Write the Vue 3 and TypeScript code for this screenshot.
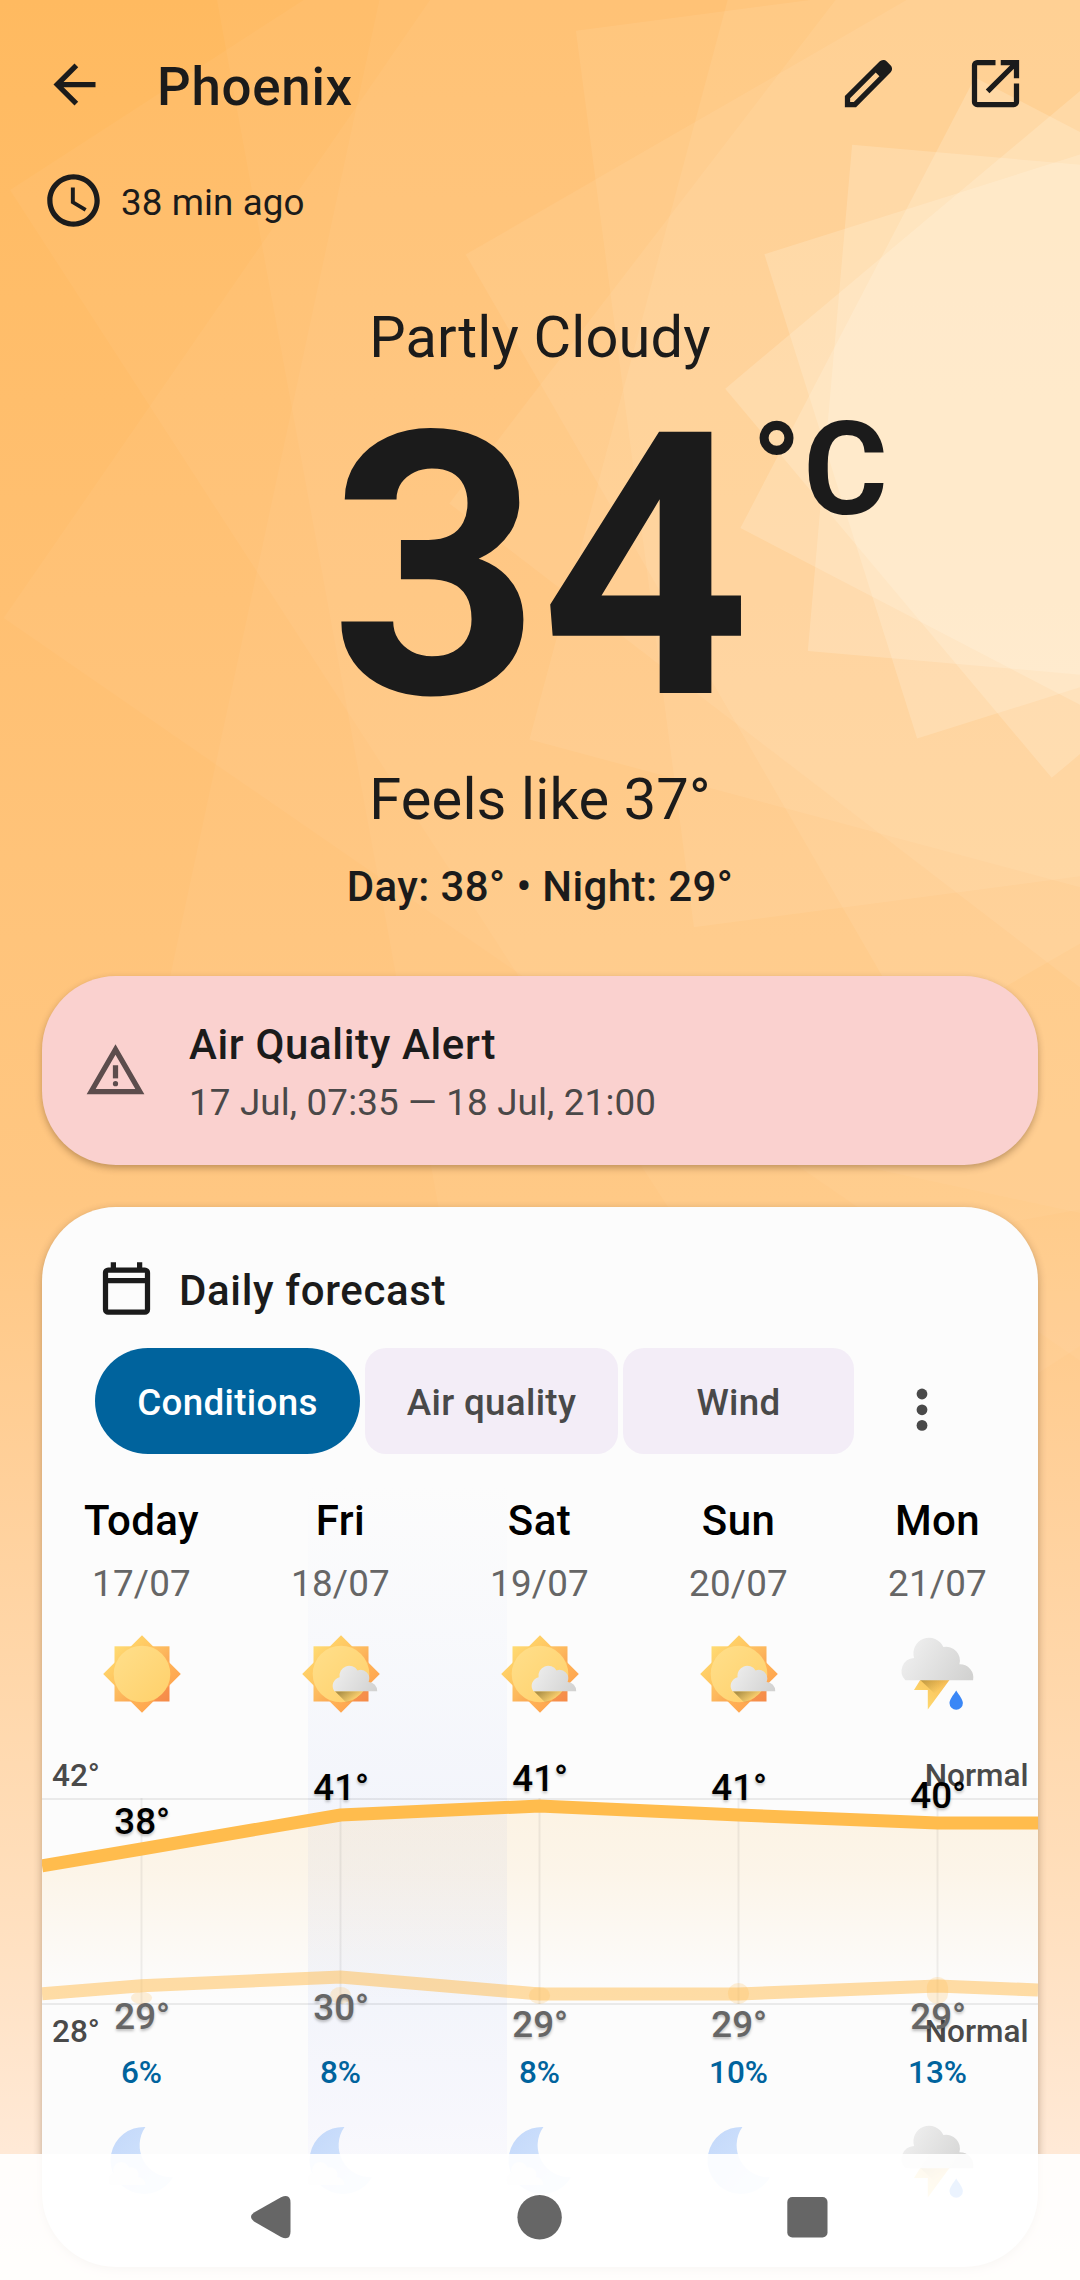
<script setup lang="ts">
type Sky = 'sun' | 'partly' | 'storm' | 'moon' | 'moonCloud'

interface Day {
  name: string
  date: string
  sky: Sky
  night: Sky
  high: number
  low: number
  highY: number
  lowY: number
  rain: number
  barTop: number
}

const days: Day[] = [
  { name: 'Today', date: '17/07', sky: 'sun', night: 'moonCloud', high: 38, low: 29, highY: 133, lowY: 269.7, rain: 6, barTop: 275.7 },
  { name: 'Fri', date: '18/07', sky: 'partly', night: 'moonCloud', high: 41, low: 30, highY: 99, lowY: 261, rain: 8, barTop: 271 },
  { name: 'Sat', date: '19/07', sky: 'partly', night: 'moonCloud', high: 41, low: 29, highY: 90, lowY: 278, rain: 8, barTop: 271 },
  { name: 'Sun', date: '20/07', sky: 'partly', night: 'moon', high: 41, low: 29, highY: 99, lowY: 278, rain: 10, barTop: 267 },
  { name: 'Mon', date: '21/07', sky: 'storm', night: 'storm', high: 40, low: 29, highY: 107, lowY: 270, rain: 13, barTop: 261 },
]

const colX = (i: number) => 99.5 + i * 199
const highPts = ['0,149.8', ...days.map((d, i) => `${colX(i)},${d.highY}`), '996,107']
const lowPts = ['0,277.8', ...days.map((d, i) => `${colX(i)},${d.lowY}`), '996,274']
const area = [...highPts, '996,288', '0,288'].join(' ')

// Sun rays: three rings of four squares turned around one centre
const rings = [
  { half: 776, angle: 12.1, alpha: 0.04 },
  { half: 452, angle: 15, alpha: 0.07 },
  { half: 254, angle: 5, alpha: 0.18 },
]
const squares = rings.flatMap((r) =>
  [0, 1, 2, 3].map((k) => ({ ...r, turn: r.angle + k * 22.5 + 45 })),
)
const tabs = ['Conditions', 'Air quality', 'Wind']
</script>

<template>
  <div class="screen">
    <svg class="rays" viewBox="0 0 1080 2280">
      <rect
        v-for="(s, i) in squares"
        :key="i"
        :x="-s.half"
        :y="-s.half"
        :width="s.half * 2"
        :height="s.half * 2"
        :fill-opacity="s.alpha"
        :transform="`translate(1083 420) rotate(${s.turn})`"
        fill="#fffdf6"
      />
    </svg>

    <svg class="defs" width="0" height="0">
      <defs>
        <linearGradient id="sq" x1="0" y1="0" x2="1" y2="1">
          <stop offset="0" stop-color="#ffdc72" />
          <stop offset=".5" stop-color="#fdb75c" />
          <stop offset=".85" stop-color="#f7914c" />
          <stop offset="1" stop-color="#f58a48" />
        </linearGradient>
        <linearGradient id="dm" x1=".25" y1=".25" x2=".75" y2=".75">
          <stop offset="0" stop-color="#ffd067" />
          <stop offset="1" stop-color="#ffa750" />
        </linearGradient>
        <linearGradient id="disc" x1="0" y1="0" x2="1" y2="1">
          <stop offset="0" stop-color="#ffdf8b" />
          <stop offset="1" stop-color="#ffd06a" />
        </linearGradient>
        <linearGradient id="cloud" gradientUnits="userSpaceOnUse" x1="15" y1="15" x2="70" y2="50">
          <stop offset="0" stop-color="#ededed" />
          <stop offset="1" stop-color="#d2d2d1" />
        </linearGradient>
        <linearGradient id="cloudS" gradientUnits="userSpaceOnUse" x1="38" y1="38" x2="76" y2="60">
          <stop offset="0" stop-color="#ececec" />
          <stop offset="1" stop-color="#d2d2d1" />
        </linearGradient>
        <linearGradient id="shade" gradientUnits="userSpaceOnUse" x1="44" y1="58" x2="53" y2="70">
          <stop offset="0" stop-color="#6b5a20" stop-opacity=".55" />
          <stop offset="1" stop-color="#6b5a20" stop-opacity="0" />
        </linearGradient>
        <linearGradient id="boltShade" gradientUnits="userSpaceOnUse" x1="28" y1="46" x2="40" y2="60">
          <stop offset="0" stop-color="#8a6a20" stop-opacity=".5" />
          <stop offset="1" stop-color="#8a6a20" stop-opacity="0" />
        </linearGradient>
        <linearGradient id="bolt" x1="1" y1="0" x2="0" y2="1">
          <stop offset="0" stop-color="#f9bd55" />
          <stop offset="1" stop-color="#ffdf76" />
        </linearGradient>
        <linearGradient id="moon" x1="0" y1="0" x2="1" y2="1">
          <stop offset="0" stop-color="#c3d8fa" />
          <stop offset="1" stop-color="#d8e8fd" />
        </linearGradient>
        <g id="sun">
          <rect x="14.5" y="14.3" width="55" height="55.2" fill="url(#sq)" />
          <path d="M42 3.2 80.8 42 42 80.8 3.2 42z" fill="url(#dm)" />
          <circle cx="42" cy="42" r="28.3" fill="url(#disc)" />
        </g>
        <g id="ic-sun"><use href="#sun" /></g>
        <g id="ic-partly">
          <use href="#sun" />
          <path d="M36 59.3H68L58 68.5Q52 71 47 70.2z" fill="url(#shade)" />
          <path d="M35.4 59.3A9 9 0 0 1 40.6 45.2A9.8 9.8 0 0 1 58.6 38.4A8.7 8.7 0 0 1 69.6 49.9A9 9 0 0 1 78.2 59.3z" fill="url(#cloudS)" />
        </g>
        <g id="ic-storm" transform="translate(.8 0)">
          <path d="M23.4 48H52.7L31 77.6V58H17.2z" fill="url(#bolt)" />
          <path d="M23.4 48H52.7L39.8 63.6z" fill="url(#boltShade)" />
          <path d="M59.4 58.4C56 63.6 52.7 67.5 52.7 71.1a6.7 6.6 0 0 0 13.4 0C66.1 67.5 62.8 63.6 59.4 58.4z" fill="#3a87f6" />
          <path d="M8.6 48.3A13 13 0 0 1 17.3 26.1A15.7 15.7 0 0 1 46.6 15A13.8 13.8 0 0 1 62.6 32.3A13.3 13.3 0 0 1 76.3 48.3z" fill="url(#cloud)" />
        </g>
        <g id="ic-moon">
          <path d="M45.4 7A33.5 33.5 0 1 0 73 57.3A32 32 0 0 1 45.4 7z" fill="url(#moon)" />
        </g>
        <g id="ic-moonCloud">
          <use href="#ic-moon" />
          <path d="M10.4 65A7.6 7.6 0 0 1 13.5 53A8.2 8.2 0 0 1 29 47.5A7.4 7.4 0 0 1 38 57A7.6 7.6 0 0 1 45.4 65z" fill="#efefed" />
        </g>
      </defs>
    </svg>

    <header class="bar">
      <svg class="ico back" viewBox="0 0 24 24"><path d="M20 11H7.83l5.59-5.59L12 4l-8 8 8 8 1.41-1.41L7.83 13H20z" /></svg>
      <h1>Phoenix</h1>
      <svg class="ico edit" viewBox="0 0 24 24">
        <path fill-rule="evenodd" d="M3 21v-4.25L16.2 3.58a2 2 0 0 1 1.35-.58c.53 0 1.03.18 1.42.6l1.4 1.4c.42.4.6.9.6 1.42 0 .5-.2 1-.6 1.38L7.25 21zM5 19h1.4l9.75-9.75-1.4-1.4L5 17.6z" />
      </svg>
      <svg class="ico" viewBox="0 0 24 24">
        <path d="M5 21q-.825 0-1.412-.587T3 19V5q0-.825.588-1.412T5 3h7v2H5v14h14v-7h2v7q0 .825-.587 1.413T19 21zm4.7-5.3-1.4-1.4L17.6 5H14V3h7v7h-2V6.4z" />
      </svg>
    </header>

    <div class="updated">
      <svg class="ico" viewBox="0 0 24 24">
        <path d="M11.99 2C6.47 2 2 6.48 2 12s4.47 10 9.99 10C17.52 22 22 17.52 22 12S17.52 2 11.99 2zM12 20c-4.42 0-8-3.58-8-8s3.58-8 8-8 8 3.58 8 8-3.58 8-8 8zm.5-13H11v6l5.25 3.15.75-1.23-4.5-2.67z" />
      </svg>
      <span>38 min ago</span>
    </div>

    <section class="now">
      <div class="cond">Partly Cloudy</div>
      <div class="temp">34<span class="unit">°C</span></div>
      <div class="feels">Feels like 37°</div>
      <div class="range">Day: 38° • Night: 29°</div>
    </section>

    <section class="alert">
      <svg class="ico" viewBox="0 0 24 24">
        <path d="M1 21 12 2l11 19zm3.45-2h15.1L12 6z" />
        <path d="M11 10h2v5h-2z" /><circle cx="12" cy="17" r="1" />
      </svg>
      <div>
        <div class="alert-title">Air Quality Alert</div>
        <div class="alert-time">17 Jul, 07:35 — 18 Jul, 21:00</div>
      </div>
    </section>

    <section class="card">
      <div class="card-head">
        <svg class="ico" viewBox="0 0 24 24">
          <path fill-rule="evenodd" d="M5 22q-.825 0-1.412-.587T3 20V6q0-.825.588-1.412T5 4h1V2h2v2h8V2h2v2h1q.825 0 1.413.588T21 6v14q0 .825-.587 1.413T19 22zM5 20h14V10H5zM5 8h14V6H5z" />
        </svg>
        <span>Daily forecast</span>
      </div>
      <div class="tabs">
        <div v-for="(t, i) in tabs" :key="t" class="tab" :class="['t' + i, { on: i === 0 }]">{{ t }}</div>
        <svg class="more" viewBox="0 0 12 44"><circle cx="6" cy="6" r="5.4" /><circle cx="6" cy="21.8" r="5.4" /><circle cx="6" cy="37.4" r="5.4" /></svg>
      </div>

      <div class="forecast">
        <div class="cols">
          <div v-for="d in days" :key="d.name" class="col">
            <div class="name">{{ d.name }}</div>
            <div class="date">{{ d.date }}</div>
            <svg class="sky" viewBox="0 0 84 84"><use :href="'#ic-' + d.sky" /></svg>
          </div>
        </div>

        <svg class="chart" viewBox="0 0 996 334">
          <defs>
            <linearGradient id="fill" gradientUnits="userSpaceOnUse" x1="0" y1="90" x2="0" y2="285">
              <stop offset="0" stop-color="#ffbb4e" stop-opacity=".14" />
              <stop offset=".35" stop-color="#ffbb4e" stop-opacity=".11" />
              <stop offset=".9" stop-color="#ffbb4e" stop-opacity=".01" />
              <stop offset="1" stop-color="#ffbb4e" stop-opacity="0" />
            </linearGradient>
          </defs>
          <rect x="0" y="82" width="996" height="2" fill="#000" fill-opacity=".07" />
          <rect x="0" y="287" width="996" height="2" fill="#000" fill-opacity=".07" />
          <text class="axis" x="10" y="69.7">42°</text>
          <text class="axis" x="986.5" y="69.7" text-anchor="end">Normal</text>
          <text class="axis" x="10" y="325.7">28°</text>
          <text class="axis" x="986.5" y="325.7" text-anchor="end">Normal</text>
          <polygon :points="area" fill="url(#fill)" />
          <rect v-for="(d, i) in days" :key="'v' + i" :x="colX(i) - 1" y="82" width="2" height="206" fill="#000" fill-opacity=".06" />
          <polyline :points="highPts.join(' ')" fill="none" stroke="#ffbc4d" stroke-width="13" />
          <polyline :points="lowPts.join(' ')" fill="none" stroke="#ffbc4d" stroke-opacity=".5" stroke-width="13" />
          <g v-for="(d, i) in days" :key="'l' + i">
            <rect
              :x="colX(i) - 10.6"
              :y="d.barTop"
              width="21.2"
              :height="288 - d.barTop"
              rx="10.6"
              :ry="Math.min(10.6, (288 - d.barTop) / 2)"
              fill="#ffbc4d"
              fill-opacity=".22"
            />
            <text class="hi" :x="colX(i) + 0.7" :y="d.highY - 14.9">{{ d.high }}°</text>
            <text class="lo" :x="colX(i) + 0.7" :y="d.lowY + 43.4">{{ d.low }}°</text>
          </g>
        </svg>

        <div class="cols rain">
          <div v-for="d in days" :key="d.name" class="col">{{ d.rain }}%</div>
        </div>
        <div class="cols nights">
          <div v-for="d in days" :key="d.name" class="col">
            <svg class="sky" viewBox="0 0 84 84"><use :href="'#ic-' + d.night" /></svg>
          </div>
        </div>
      </div>
    </section>

    <nav class="nav">
      <svg viewBox="0 0 1080 126">
        <path d="M281 43.2 254 58.6Q248 63 254 67.4L281 83Q290.5 87 290.5 77.5V48.6Q290.5 39 281 43.2z" />
        <circle cx="539.6" cy="63.2" r="22.2" />
        <rect x="787.3" y="43" width="40.2" height="40.4" rx="5" />
      </svg>
    </nav>
  </div>
</template>

<style>
body {
  margin: 0;
}
</style>

<style scoped>
.screen {
  position: relative;
  width: 1080px;
  height: 2280px;
  overflow: hidden;
  font-family: Roboto, sans-serif;
  color: #1b1b1b;
  background: linear-gradient(
    #ffba60 0,
    #ffc072 600px,
    #ffc782 1200px,
    #ffd09a 1480px,
    #ffddb8 1850px,
    #ffe9d6 2150px,
    #ffeee0 2280px
  );
}
.rays {
  position: absolute;
  inset: 0;
  width: 1080px;
  height: 2280px;
}
.defs {
  position: absolute;
}
.ico {
  width: 63px;
  height: 63px;
  flex: none;
  fill: #1b1b1b;
}
.bar {
  position: relative;
  display: flex;
  align-items: flex-start;
  height: 117px;
  padding: 52px 53px 0 42.5px;
}
.bar .back {
  margin-top: 1px;
}
h1 {
  flex: 1;
  margin: 0 0 0 51.5px;
  font-size: 52.8px;
  font-weight: 500;
  line-height: 70px;
  letter-spacing: 0.75px;
}
.edit {
  margin-right: 64px;
}
.updated {
  position: relative;
  display: flex;
  height: 63px;
  padding-left: 42px;
  gap: 16px;
  font-size: 36.75px;
  line-height: 67px;
  letter-spacing: 0.1px;
}
.now {
  position: relative;
  display: flex;
  flex-direction: column;
  align-items: center;
  margin-top: 71px;
  height: 673px;
}
.cond,
.feels {
  font-size: 57.75px;
  line-height: 68px;
  letter-spacing: 0.17px;
}
.temp {
  position: relative;
  margin-top: 46px;
  font-size: 367.5px;
  font-weight: 700;
  line-height: 301px;
  letter-spacing: -0.9px;
}
.unit {
  position: absolute;
  left: 100%;
  top: 0;
  margin-left: 1.5px;
  font-size: 129px;
  line-height: 105px;
  letter-spacing: 1.5px;
}
.feels {
  margin-top: 47px;
}
.range {
  margin-top: 29px;
  font-size: 42px;
  font-weight: 500;
  line-height: 50px;
  letter-spacing: 0.4px;
}
.alert {
  position: relative;
  box-sizing: border-box;
  display: flex;
  align-items: center;
  gap: 42px;
  width: 996px;
  height: 189px;
  margin: 0 42px;
  padding-left: 42px;
  border-radius: 74px;
  background: #fad1cf;
  box-shadow: 0 3px 7px rgba(60, 30, 0, 0.32);
}
.alert .ico {
  fill: #5c4d4d;
}
.alert-title {
  margin-top: 3px;
  font-size: 42px;
  font-weight: 500;
  line-height: 60px;
  letter-spacing: 0.65px;
}
.alert-time {
  font-size: 36.75px;
  line-height: 55px;
  letter-spacing: 0.16px;
  color: #4a4848;
}
.card {
  position: relative;
  box-sizing: border-box;
  width: 996px;
  height: 1060px;
  margin: 42px 42px 0;
  padding-top: 50px;
  border-radius: 74px;
  background: #fcfcfc;
  box-shadow: 0 3px 8px rgba(60, 30, 0, 0.32);
}
.card-head {
  display: flex;
  height: 68px;
  gap: 21px;
  padding-left: 53px;
  font-size: 42px;
  font-weight: 500;
  line-height: 68px;
  letter-spacing: 0.64px;
}
.tabs {
  display: flex;
  gap: 5px;
  margin: 23px 0 31px 53px;
}
.tab {
  height: 106px;
  border-radius: 21px;
  background: #f3edf7;
  color: #494949;
  font-size: 36.75px;
  font-weight: 500;
  line-height: 109px;
  letter-spacing: 0.33px;
  text-align: center;
}
.t0 {
  width: 265px;
}
.t1 {
  width: 253px;
}
.t2 {
  width: 231px;
}
.tab.on {
  border-radius: 53px;
  background: #00639d;
  color: #fff;
}
.more {
  width: 12px;
  height: 44px;
  margin: 40px 0 0 56.5px;
  fill: #494949;
}
.forecast {
  background: linear-gradient(
      rgba(225, 232, 252, 0) 0,
      rgba(222, 229, 250, 0.3) 330px,
      rgba(220, 227, 248, 0.3) 500px,
      rgba(236, 236, 254, 0.3) 640px,
      rgba(240, 238, 255, 0.1) 100%
    )
    266px 0 / 199px 100% no-repeat;
  height: 719px;
}
.cols {
  display: flex;
}
.col {
  flex: none;
  width: 199px;
  display: flex;
  flex-direction: column;
  align-items: center;
}
.name {
  font-size: 42px;
  font-weight: 500;
  line-height: 72px;
  letter-spacing: 0.4px;
  color: #000;
}
.date {
  font-size: 36.75px;
  line-height: 53px;
  letter-spacing: 0.2px;
  color: #666;
}
.sky {
  width: 84px;
  height: 84px;
  margin-top: 22px;
}
.chart {
  display: block;
  width: 996px;
  height: 334px;
}
.axis {
  font-size: 31.5px;
  font-weight: 500;
  fill: #4a4a4a;
}
.hi,
.lo {
  font-size: 36.75px;
  font-weight: 500;
  text-anchor: middle;
  fill: #000;
  text-shadow: 0 2px 3px rgba(0, 0, 0, 0.25);
}
.lo {
  fill: #666;
}
.rain {
  font-size: 31.5px;
  font-weight: 500;
  line-height: 45px;
  color: #00639d;
}
.nights .sky {
  margin-top: 25px;
}
.nav {
  position: absolute;
  left: 0;
  right: 0;
  bottom: 0;
  height: 126px;
  background: rgba(255, 255, 255, 0.9);
}
.nav svg {
  display: block;
  width: 1080px;
  height: 126px;
  fill: #666;
}
</style>
